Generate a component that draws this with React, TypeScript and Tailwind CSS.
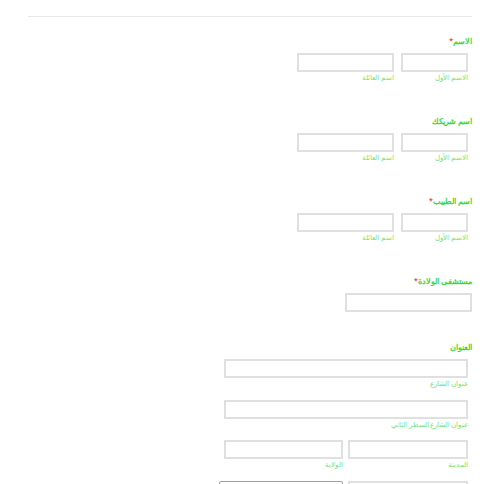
import React from 'react'

const Label: React.FC<{ text: string; required?: boolean }> = ({ text, required }) => (
  <div className="text-[8px] leading-[12px] font-bold text-[#3ad83a]">
    {text}
    {required && <span className="text-[#f04a4a] text-[7px] align-top">*</span>}
  </div>
)

const Sub: React.FC<{ text: string }> = ({ text }) => (
  <div className="text-[6.5px] leading-[12px] text-[#72e472]">{text}</div>
)

const Field: React.FC<{ className?: string; select?: boolean }> = ({ className, select }) => (
  <div
    className={`h-[19px] bg-white ${
      select ? 'border border-[#a0a0a0] rounded-[2px]' : 'border-2 border-[#e0e0e0]'
    } ${className ?? ''}`}
  />
)

const NameBlock: React.FC<{ label: string; required?: boolean; first?: boolean }> = ({ label, required, first }) => (
  <div className={first ? 'mt-[18px]' : 'mt-[31px]'}>
    <Label text={label} required={required} />
    <div className="mt-[6px] flex gap-[7px] pr-[4px]">
      <div className="w-[67px]">
        <Field />
        <Sub text="الاسم الأول" />
      </div>
      <div className="w-[97px]">
        <Field />
        <Sub text="اسم العائلة" />
      </div>
    </div>
  </div>
)

export default function App() {
  return (
    <div
      dir="rtl"
      className="w-[500px] h-[484px] overflow-hidden bg-white px-[28px] pt-[16px] font-['Noto_Sans',sans-serif]"
    >
      <div className="border-t border-[#e6e9e6]" />

      <NameBlock label="الاسم" required first />
      <NameBlock label="اسم شريكك" />
      <NameBlock label="اسم الطبيب" required />

      <div className="mt-[31px]">
        <Label text="مستشفى الولادة" required />
        <Field className="mt-[6px] w-[127px]" />
      </div>

      <div className="mt-[29px]">
        <Label text="العنوان" />
        <div className="pr-[4px] w-[248px]">
          <div className="mt-[6px]">
            <Field />
            <Sub text="عنوان الشارع" />
          </div>
          <div className="mt-[10px]">
            <Field />
            <Sub text="عنوان الشارع السطر الثاني" />
          </div>
          <div className="mt-[9px] flex gap-[5px]">
            <div className="w-[120px]">
              <Field />
              <Sub text="المدينة" />
            </div>
            <div className="w-[119px]">
              <Field />
              <Sub text="الولاية" />
            </div>
          </div>
          <div className="mt-[10px] flex gap-[5px] w-[249px] shrink-0">
            <div className="w-[120px] shrink-0">
              <Field />
            </div>
            <div className="w-[124px] shrink-0">
              <Field select />
            </div>
          </div>
        </div>
      </div>
    </div>
  )
}
